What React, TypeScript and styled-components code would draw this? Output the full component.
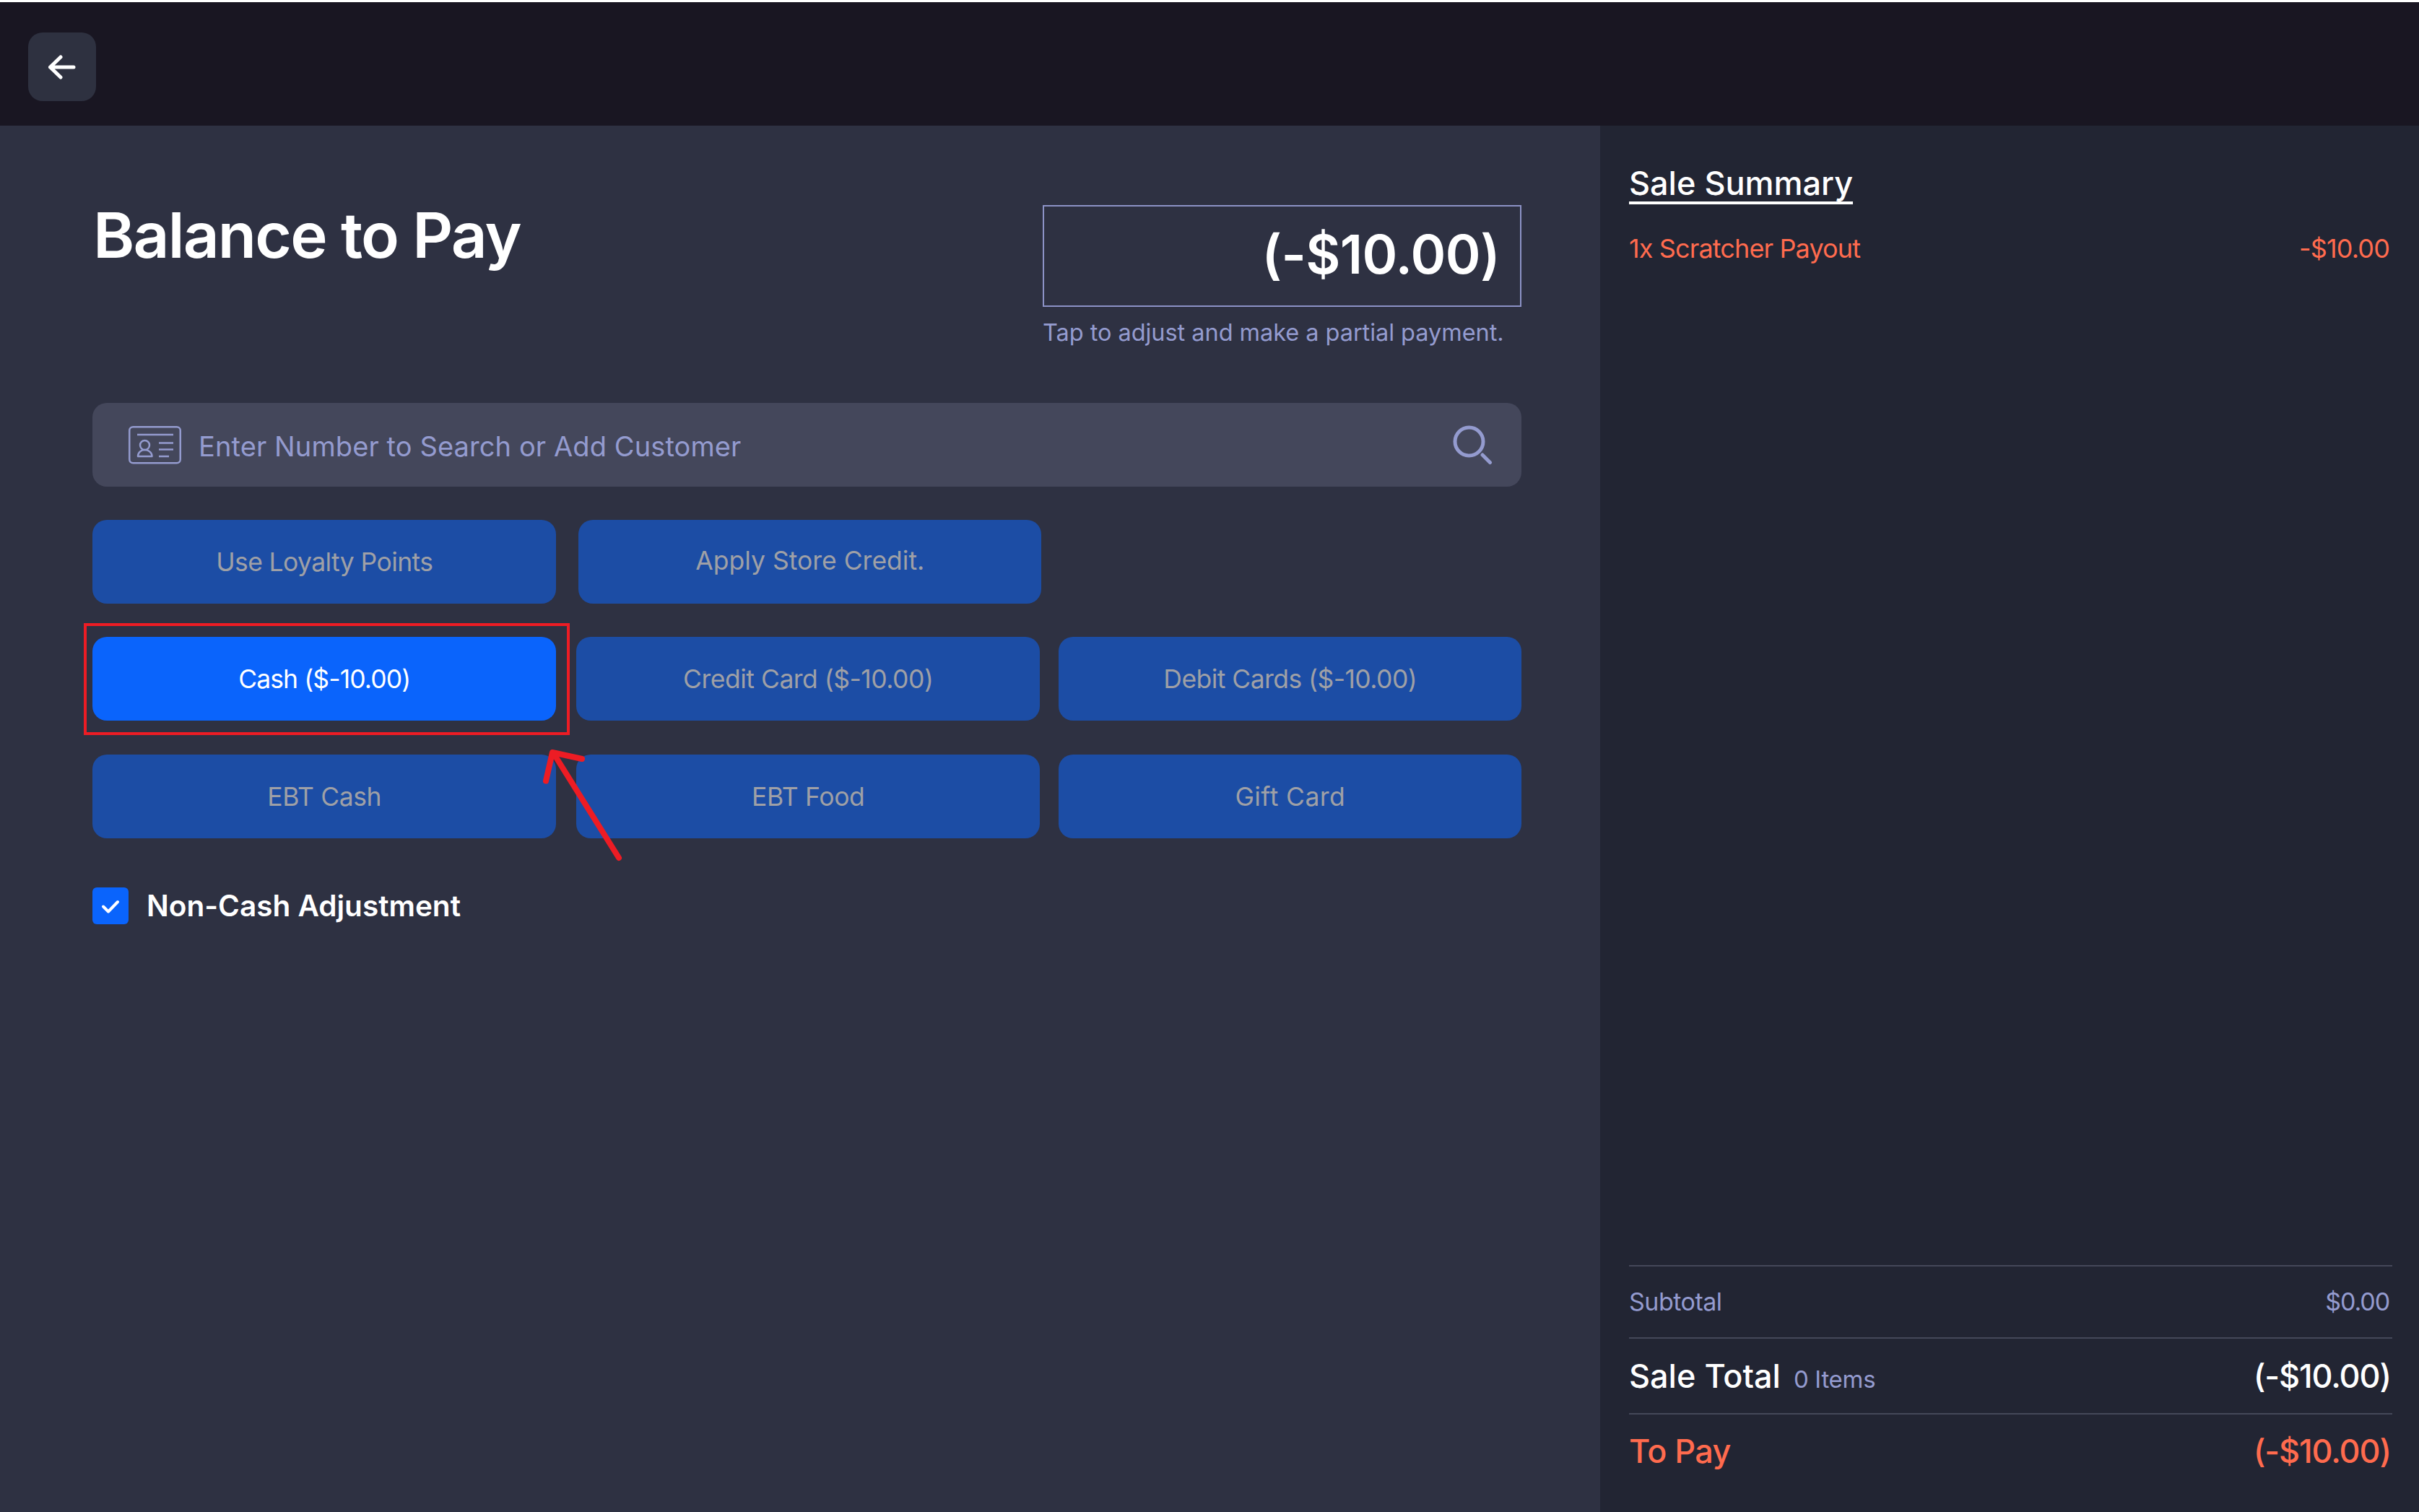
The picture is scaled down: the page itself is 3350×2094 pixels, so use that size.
import React from 'react';
import styled, { createGlobalStyle } from 'styled-components';

const GlobalStyle = createGlobalStyle`
  * {
    box-sizing: border-box;
  }

  body {
    margin: 0;
    background: #2e3142;
    color: #fff;
    font-family: Inter, 'Liberation Sans', sans-serif;
  }
`;

const Page = styled.div`
  display: flex;
  flex-direction: column;
  height: 2094px;
  border-top: 3px solid #fff;
`;

const Header = styled.header`
  display: flex;
  flex: none;
  height: 171px;
  padding: 42px 39px 0;
  background: #191622;
`;

const BackButton = styled.button`
  display: flex;
  align-items: center;
  justify-content: center;
  width: 94px;
  height: 95px;
  padding: 0;
  border: 0;
  border-radius: 20px;
  background: #2e3140;
`;

const Body = styled.div`
  display: flex;
  flex: 1;
`;

const Main = styled.main`
  display: flex;
  flex-direction: column;
  width: 2216px;
  padding: 101px 109px 0 128px;
  background: #2e3142;
`;

const BalanceRow = styled.div`
  display: flex;
  justify-content: space-between;
  height: 283px;
`;

const Title = styled.h1`
  margin: 0;
  padding: 1px 0 0 1px;
  font-size: 87px;
  font-weight: 560;
  line-height: 100px;
  letter-spacing: -1.8px;
`;

const AmountColumn = styled.div`
  width: 663px;
  padding-top: 9px;
`;

const AmountBox = styled.div`
  display: flex;
  align-items: center;
  justify-content: flex-end;
  height: 141px;
  padding: 0 28px 6px 0;
  border: 2px solid #8c92c6;
  font-size: 74px;
  font-weight: 560;
  letter-spacing: -0.6px;
`;

const Hint = styled.p`
  margin: 16px 0 0;
  color: #949bcf;
  font-size: 32.5px;
  line-height: 40px;
  letter-spacing: -0.05px;
  white-space: nowrap;
`;

const SearchField = styled.div`
  display: flex;
  align-items: center;
  height: 116px;
  padding: 0 40px 0 50px;
  border-radius: 20px;
  background: #44475b;
  color: #949bcf;
`;

const Placeholder = styled.span`
  flex: 1;
  padding: 4px 0 0 24px;
  font-size: 38px;
  letter-spacing: 0.1px;
`;

const ButtonRow = styled.div<{ $columns: string }>`
  display: grid;
  grid-template-columns: ${({ $columns }) => $columns};
  margin-top: 46.2px;
`;

const PayButton = styled.button<{ $active?: boolean; $lift?: number; $tracking?: number }>`
  position: relative;
  width: 641.5px;
  height: 116px;
  padding: 1px 0 ${({ $lift }) => ($lift || 0) * 2}px 1px;
  border: 0;
  border-radius: 20px;
  background: ${({ $active }) => ($active ? '#0a64fc' : '#1c4da5')};
  color: ${({ $active }) => ($active ? '#fff' : '#9fa0a6')};
  font-family: inherit;
  font-size: 35.5px;
  letter-spacing: ${({ $tracking }) => $tracking || 0}px;
`;

const Outline = styled.div`
  position: absolute;
  z-index: 1;
  top: -19px;
  left: -12px;
  width: 673px;
  height: 155px;
  border: 4px solid #ed1c24;
`;

const Pointer = styled.svg`
  position: absolute;
  z-index: 1;
  top: 147px;
  left: 612px;
`;

const CheckRow = styled.label`
  display: flex;
  align-items: center;
  gap: 25px;
  margin-top: 68.7px;
  font-size: 40.5px;
  font-weight: 600;
`;

const CheckBox = styled.span`
  display: flex;
  align-items: center;
  justify-content: center;
  width: 50px;
  height: 51px;
  border-radius: 6px;
  background: #0a64fc;
`;

const Summary = styled.aside`
  display: flex;
  flex: 1;
  flex-direction: column;
  padding: 53px 37px 34px 40px;
  background: #222533;
`;

const SummaryTitle = styled.h2`
  align-self: flex-start;
  margin: 0;
  font-size: 45px;
  font-weight: 540;
  line-height: 54px;
  text-decoration: underline;
  text-decoration-skip-ink: none;
  text-decoration-thickness: 4px;
  text-underline-offset: 9px;
`;

const SaleItem = styled.div`
  display: flex;
  justify-content: space-between;
  margin-top: 41px;
  padding-right: 4px;
  color: #ff6b4e;
  font-size: 36px;
  line-height: 44px;
  letter-spacing: -0.87px;
`;

const Totals = styled.div`
  margin-top: auto;
`;

const TotalRow = styled.div<{ $height: number; $color?: string; $small?: boolean }>`
  display: flex;
  align-items: center;
  justify-content: space-between;
  height: ${({ $height }) => $height}px;
  padding: 0 ${({ $small }) => ($small ? 4 : 2)}px 1px 0;
  border-top: 2px solid #444859;
  color: ${({ $color }) => $color || '#fff'};
  font-size: ${({ $small }) => ($small ? 34 : 45)}px;
  font-weight: ${({ $small }) => ($small ? 400 : 540)};
`;

const TotalLabel = styled.span<{ $tracking?: number }>`
  letter-spacing: ${({ $tracking }) => $tracking || 0}px;
`;

const TotalValue = styled.span`
  letter-spacing: -1.1px;
`;

const ItemCount = styled.span`
  margin-left: 18px;
  color: #949bcf;
  font-size: 33px;
  font-weight: 400;
  letter-spacing: -0.3px;
`;

const ArrowLeft = () => (
  <svg width="40" height="34" viewBox="0 0 40 34" fill="none" stroke="#fff" strokeWidth="5" strokeLinecap="round" strokeLinejoin="round">
    <path d="M36 17H3.500M18 3L3.500 17L18 31" />
  </svg>
);

const CustomerCard = () => (
  <svg width="73" height="53" viewBox="0 0 73 53" fill="none" stroke="currentColor" strokeWidth="2.500">
    <rect x="1.250" y="1.250" width="70.500" height="50" rx="5" />
    <path d="M12 12h50M42 23.500h20M42 32.500h20M42 42h14" />
    <circle cx="22.500" cy="26.500" r="6.500" />
    <path d="M13 42c0-5 4-9 9.500-9s10 4 10 9z" strokeLinejoin="round" />
  </svg>
);

const SearchIcon = () => (
  <svg width="56" height="58" viewBox="0 0 56 58" fill="none" stroke="currentColor" strokeWidth="5" strokeLinecap="round">
    <circle cx="23.500" cy="24.500" r="19.500" />
    <path d="M42 43l10.500 10.500" />
  </svg>
);

const App = (): JSX.Element => {
  return (
    <>
      <GlobalStyle />
      <Page>
        <Header>
          <BackButton aria-label="Back">
            <ArrowLeft />
          </BackButton>
        </Header>
        <Body>
          <Main>
            <BalanceRow>
              <Title>Balance to Pay</Title>
              <AmountColumn>
                <AmountBox>(-$10.00)</AmountBox>
                <Hint>Tap to adjust and make a partial payment.</Hint>
              </AmountColumn>
            </BalanceRow>
            <SearchField>
              <CustomerCard />
              <Placeholder>Enter Number to Search or Add Customer</Placeholder>
              <SearchIcon />
            </SearchField>
            <ButtonRow $columns="672.5px 641.5px">
              <PayButton $tracking={-0.6}>Use Loyalty Points</PayButton>
              <PayButton $lift={2}>Apply Store Credit.</PayButton>
            </ButtonRow>
            <ButtonRow $columns="670px 667.5px 641.5px">
              <PayButton $active $tracking={-0.9}>
                Cash ($-10.00)
                <Outline />
                <Pointer width="126" height="166" viewBox="0 0 126 166" fill="none" stroke="#ed1c24" strokeWidth="8" strokeLinecap="round" strokeLinejoin="round">
                  <path d="M16 52.500L25 13l41 9M27 15l90 144" />
                </Pointer>
              </PayButton>
              <PayButton $tracking={-0.5}>Credit Card ($-10.00)</PayButton>
              <PayButton $tracking={-0.55}>Debit Cards ($-10.00)</PayButton>
            </ButtonRow>
            <ButtonRow $columns="670px 667.5px 641.5px">
              <PayButton $tracking={-0.4}>EBT Cash</PayButton>
              <PayButton $tracking={-0.35}>EBT Food</PayButton>
              <PayButton $tracking={0.4}>Gift Card</PayButton>
            </ButtonRow>
            <CheckRow>
              <CheckBox>
                <svg width="26" height="26" viewBox="0 0 26 26" fill="none" stroke="#fff" strokeWidth="4" strokeLinecap="round" strokeLinejoin="round">
                  <path d="M3 13.500l7 7L23 7" />
                </svg>
              </CheckBox>
              Non-Cash Adjustment
            </CheckRow>
          </Main>
          <Summary>
            <SummaryTitle>Sale Summary</SummaryTitle>
            <SaleItem>
              <span>1x Scratcher Payout</span>
              <span>-$10.00</span>
            </SaleItem>
            <Totals>
              <TotalRow $height={100} $color="#949bcf" $small>
                <TotalLabel $tracking={-0.5}>Subtotal</TotalLabel>
                <TotalValue>$0.00</TotalValue>
              </TotalRow>
              <TotalRow $height={105}>
                <TotalLabel>
                  Sale Total
                  <ItemCount>0 Items</ItemCount>
                </TotalLabel>
                <TotalValue>(-$10.00)</TotalValue>
              </TotalRow>
              <TotalRow $height={103} $color="#ff6b4e">
                <TotalLabel $tracking={-0.6}>To Pay</TotalLabel>
                <TotalValue>(-$10.00)</TotalValue>
              </TotalRow>
            </Totals>
          </Summary>
        </Body>
      </Page>
    </>
  );
};

export default App;
